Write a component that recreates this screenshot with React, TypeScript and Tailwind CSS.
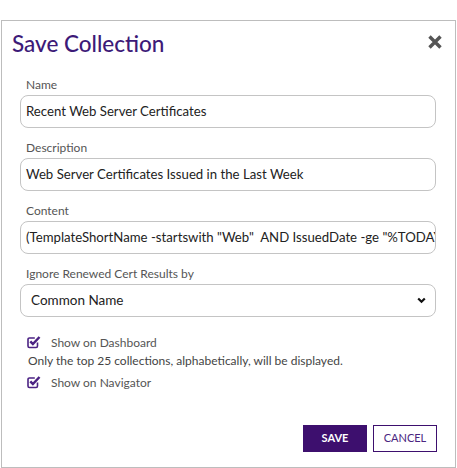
import React from "react";

const PURPLE = "#3d0f6e";

function CheckIcon() {
  return (
    <svg width="16" height="16" viewBox="0 0 16 16" className="-mt-[2px] shrink-0">
      <path
        d="M11.5 8.5v3.6a1.4 1.4 0 0 1-1.4 1.4H3.4A1.4 1.4 0 0 1 2 12.1V5.4A1.4 1.4 0 0 1 3.4 4h5.4"
        fill="none"
        stroke="#4b2283"
        strokeWidth="1.6"
      />
      <path d="M4.3 7.3l2.6 2.7 6.6-7" fill="none" stroke="#4b2283" strokeWidth="2.5" />
    </svg>
  );
}

function Field({ label, value }: { label: string; value: string }) {
  return (
    <div className="flex flex-col">
      <label className="pl-[6px] text-[12px] leading-[16px] text-[#555]">{label}</label>
      <div className="mt-[2px] flex h-[33px] w-[416px] items-center overflow-hidden whitespace-pre rounded-[8px] border border-[#c4c4c4] pl-[5px] text-[13.2px] text-[#222]">
        {value}
      </div>
    </div>
  );
}

export default function App() {
  return (
    <div className="h-[468px] w-[457px] bg-white pt-[20px] pl-[1px]" style={{ fontFamily: "Lato, 'Open Sans', sans-serif" }}>
      <div className="flex h-[448px] w-[455px] flex-col border border-[#bdbdbd] bg-white">
        <div className="flex items-start justify-between pl-[10px] pr-[12px] pt-[9px]">
          <h2 className="text-[22.5px] font-medium leading-[28px] text-[#3d1a78]">Save Collection</h2>
          <svg width="16" height="16" viewBox="0 0 16 16" className="mt-[4px]">
            <path d="M2.5 2.5l11 11M13.5 2.5l-11 11" stroke="#555" strokeWidth="3.4" />
          </svg>
        </div>
        <div className="flex flex-col gap-[12px] px-[18px] pt-[19px]">
          <Field label="Name" value="Recent Web Server Certificates" />
          <Field label="Description" value="Web Server Certificates Issued in the Last Week" />
          <Field label="Content" value={'(TemplateShortName -startswith "Web"  AND IssuedDate -ge "%TODAY%-7")'} />
          <div className="flex flex-col">
            <label className="pl-[6px] text-[12px] leading-[16px] text-[#555]">Ignore Renewed Cert Results by</label>
            <div className="mt-[2px] flex h-[33px] w-[416px] items-center justify-between rounded-[8px] border border-[#c4c4c4] pl-[10px] pr-[9px] text-[13.5px] text-[#222]">
              <span>Common Name</span>
              <svg width="9" height="7" viewBox="0 0 9 7">
                <path d="M1.2 1.5l3.3 3.3 3.3-3.3" fill="none" stroke="#111" strokeWidth="2.2" />
              </svg>
            </div>
          </div>
        </div>
        <div className="flex flex-col px-[24px] pt-[18px] text-[12px] text-[#555]">
          <div className="flex items-center gap-[9px] leading-[16px]">
            <CheckIcon />
            <span>Show on Dashboard</span>
          </div>
          <div className="mt-[2px] pl-[2px] text-[12px] leading-[16px] text-[#444]">
            Only the top 25 collections, alphabetically, will be displayed.
          </div>
          <div className="mt-[6px] flex items-center gap-[9px] leading-[16px]">
            <CheckIcon />
            <span>Show on Navigator</span>
          </div>
        </div>
        <div className="mt-auto flex justify-end gap-[6px] pb-[15px] pr-[18px]">
          <button className="flex h-[27px] w-[64px] items-center justify-center text-[11px] font-bold text-white" style={{ background: PURPLE }}>
            SAVE
          </button>
          <button className="flex h-[27px] w-[64px] items-center justify-center border-[1.5px] border-[#3d0f6e] bg-white text-[11px] text-[#4a2580]">
            CANCEL
          </button>
        </div>
      </div>
    </div>
  );
}
